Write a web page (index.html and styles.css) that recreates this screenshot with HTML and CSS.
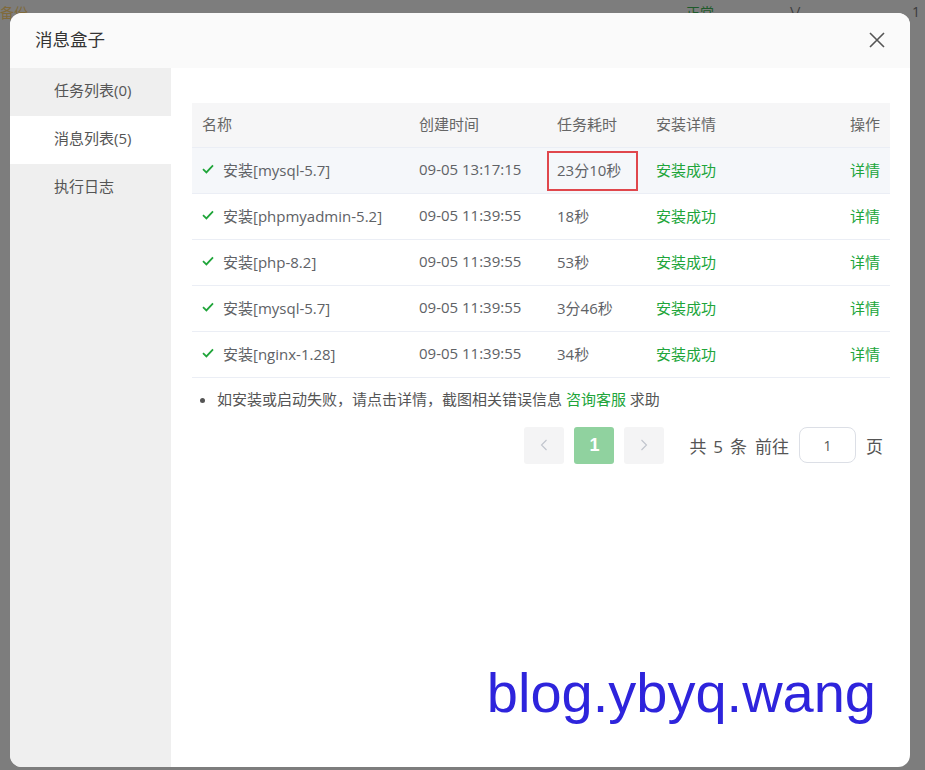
FILE: index.html
```html
<!DOCTYPE html>
<html lang="zh-CN">
<head>
<meta charset="utf-8">
<title>消息盒子</title>
<link rel="stylesheet" href="styles.css">
</head>
<body>
<div class="under">
  <span class="u-a">备份</span>
  <span class="u-b">正常</span>
  <span class="u-c">\/</span>
  <span class="u-d">1</span>
</div>

<div class="modal">
  <div class="modal-head">
    <span class="modal-title">消息盒子</span>
    <svg class="close" width="16" height="16" viewBox="0 0 16 16"><path d="M1 1L15 15M15 1L1 15" stroke="#555" stroke-width="1.6" fill="none"/></svg>
  </div>
  <div class="modal-body">
    <ul class="side">
      <li class="side-item">任务列表(0)</li>
      <li class="side-item active">消息列表(5)</li>
      <li class="side-item">执行日志</li>
    </ul>
    <div class="main">
      <table class="tbl">
        <colgroup>
          <col class="c1"><col class="c2"><col class="c3"><col class="c4"><col class="c5">
        </colgroup>
        <thead>
          <tr><th>名称</th><th>创建时间</th><th>任务耗时</th><th>安装详情</th><th class="r">操作</th></tr>
        </thead>
        <tbody>
          <tr class="hover">
            <td><span class="name"><svg class="ok" width="12" height="10" viewBox="0 0 12 10"><path d="M1 5.2L4.4 8.4L11 1.4" stroke="#20a53a" stroke-width="1.8" fill="none"/></svg>安装[mysql-5.7]</span></td>
            <td>09-05 13:17:15</td>
            <td class="mark-cell">23分10秒<span class="mark"></span></td>
            <td class="green">安装成功</td>
            <td class="r green">详情</td>
          </tr>
          <tr>
            <td><span class="name"><svg class="ok" width="12" height="10" viewBox="0 0 12 10"><path d="M1 5.2L4.4 8.4L11 1.4" stroke="#20a53a" stroke-width="1.8" fill="none"/></svg>安装[phpmyadmin-5.2]</span></td>
            <td>09-05 11:39:55</td>
            <td>18秒</td>
            <td class="green">安装成功</td>
            <td class="r green">详情</td>
          </tr>
          <tr>
            <td><span class="name"><svg class="ok" width="12" height="10" viewBox="0 0 12 10"><path d="M1 5.2L4.4 8.4L11 1.4" stroke="#20a53a" stroke-width="1.8" fill="none"/></svg>安装[php-8.2]</span></td>
            <td>09-05 11:39:55</td>
            <td>53秒</td>
            <td class="green">安装成功</td>
            <td class="r green">详情</td>
          </tr>
          <tr>
            <td><span class="name"><svg class="ok" width="12" height="10" viewBox="0 0 12 10"><path d="M1 5.2L4.4 8.4L11 1.4" stroke="#20a53a" stroke-width="1.8" fill="none"/></svg>安装[mysql-5.7]</span></td>
            <td>09-05 11:39:55</td>
            <td>3分46秒</td>
            <td class="green">安装成功</td>
            <td class="r green">详情</td>
          </tr>
          <tr>
            <td><span class="name"><svg class="ok" width="12" height="10" viewBox="0 0 12 10"><path d="M1 5.2L4.4 8.4L11 1.4" stroke="#20a53a" stroke-width="1.8" fill="none"/></svg>安装[nginx-1.28]</span></td>
            <td>09-05 11:39:55</td>
            <td>34秒</td>
            <td class="green">安装成功</td>
            <td class="r green">详情</td>
          </tr>
        </tbody>
      </table>
      <ul class="tips">
        <li>如安装或启动失败，请点击详情，截图相关错误信息 <span class="green">咨询客服</span> 求助</li>
      </ul>
      <div class="pager">
        <span class="pbtn"><svg width="8" height="12" viewBox="0 0 8 12"><path d="M6.5 1L1.5 6L6.5 11" stroke="#c0c4cc" stroke-width="1.1" fill="none"/></svg></span>
        <span class="pbtn cur">1</span>
        <span class="pbtn"><svg width="8" height="12" viewBox="0 0 8 12"><path d="M1.5 1L6.5 6L1.5 11" stroke="#c0c4cc" stroke-width="1.1" fill="none"/></svg></span>
        <span class="ptotal">共 5 条</span>
        <span class="pgo">前往</span>
        <span class="pinput">1</span>
        <span class="pgo pg-last">页</span>
      </div>
      <div class="wm">blog.ybyq.wang</div>
    </div>
  </div>
</div>
</body>
</html>
```

FILE: styles.css
```css
* { box-sizing: border-box; }
html, body { margin: 0; padding: 0; }
body {
  width: 925px;
  height: 770px;
  overflow: hidden;
  background: #7d7d7d;
  font-family: "Open Sans", "Noto Sans CJK SC", sans-serif;
  position: relative;
}
.under {
  height: 40px;
  position: relative;
  font-size: 14px;
}
.under span { position: absolute; top: 2px; }
.u-a { left: 0; color: #806a3a; }
.u-b { left: 686px; color: #1e5a2a; }
.u-c { left: 790px; color: #3a3a3a; }
.u-d { left: 912px; color: #3a3a3a; }

.modal {
  position: absolute;
  left: 10px;
  top: 13px;
  width: 900px;
  height: 754px;
  background: #fff;
  border-radius: 12px;
  overflow: hidden;
  display: flex;
  flex-direction: column;
}
.modal-head {
  height: 55px;
  flex: none;
  background: #fafafa;
  display: flex;
  align-items: center;
  justify-content: space-between;
  padding: 0 25px 3px 25px;
}
.modal-title {
  font-size: 17.5px;
  color: #333;
  line-height: 24px;
}
.close { display: block; margin-top: 2px; }

.modal-body {
  flex: 1;
  display: flex;
  min-height: 0;
}
.side {
  width: 161px;
  flex: none;
  background: #efefef;
  margin: 0;
  padding: 0;
  list-style: none;
}
.side-item {
  height: 48px;
  line-height: 44px;
  padding-left: 44px;
  font-size: 15px;
  color: #555;
}
.side-item.active { background: #fff; }

.main {
  flex: 1;
  padding: 35px 20px 0 21px;
  display: flex;
  flex-direction: column;
}
.tbl {
  width: 698px;
  border-collapse: collapse;
  table-layout: fixed;
  font-size: 15px;
  color: #606266;
}
.c1 { width: 217px; }
.c2 { width: 138px; }
.c3 { width: 99px; }
.c4 { width: 150px; }
.c5 { width: 94px; }
.tbl th {
  height: 44px;
  background: #f6f6f7;
  text-align: left;
  font-weight: normal;
  color: #666;
  padding: 0 10px 2px;
  border-bottom: 1px solid #ebeef5;
}
.tbl td {
  height: 46px;
  padding: 0 10px 2px;
  border-bottom: 1px solid #ebeef5;
  white-space: nowrap;
}
.tbl .r { text-align: right; }
.tbl tr.hover td { background: #f5f7fa; }
.green { color: #20a53a; }
.name { display: inline-flex; align-items: center; }
.ok { margin-right: 9px; margin-top: -2px; }
.mark-cell { position: relative; }
.mark {
  position: absolute;
  left: 0;
  top: 3px;
  width: 91px;
  height: 40px;
  border: 2px solid #e0474c;
}

.tips {
  margin: 11px 0 0 0;
  padding: 0 0 0 25px;
  font-size: 15px;
  color: #555;
  line-height: 20px;
}
.tips li::marker { color: #555; }

.pager {
  display: flex;
  align-items: center;
  justify-content: flex-end;
  margin-top: 18px;
  padding-right: 7px;
}
.pbtn {
  width: 40px;
  height: 37px;
  margin-left: 10px;
  background: #f4f4f5;
  border-radius: 3px;
  display: flex;
  align-items: center;
  justify-content: center;
}
.pbtn.cur {
  background: #90d29f;
  color: #fff;
  font-weight: bold;
  font-size: 18px;
  font-family: "Liberation Sans", sans-serif;
}
.ptotal {
  margin-left: 25px;
  font-size: 17px;
  color: #555;
  word-spacing: 2.5px;
}
.pgo {
  margin-left: 8px;
  font-size: 17px;
  color: #555;
}
.pg-last { margin-left: 10px; }
.pinput {
  margin-left: 10px;
  width: 57px;
  height: 36px;
  border: 1px solid #dcdfe6;
  border-radius: 8px;
  display: flex;
  align-items: center;
  justify-content: center;
  font-size: 14px;
  color: #555;
}
.wm {
  margin-top: auto;
  margin-bottom: 44px;
  align-self: flex-end;
  margin-right: 14px;
  font-family: "Liberation Sans", sans-serif;
  font-size: 56px;
  line-height: 60px;
  color: #2e24dc;
}
```
